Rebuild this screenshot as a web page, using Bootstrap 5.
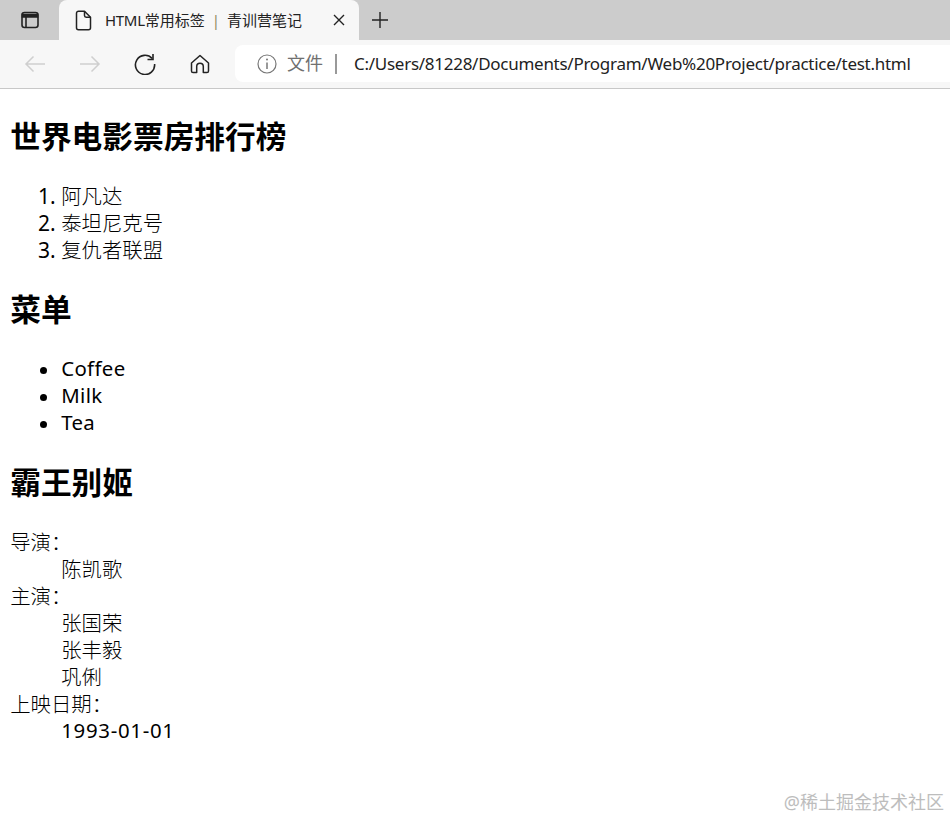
<!DOCTYPE html>
<html lang="zh-CN">
<head>
<meta charset="utf-8">
<title>HTML常用标签 | 青训营笔记</title>
<link href="https://cdn.jsdelivr.net/npm/bootstrap@5.3.0/dist/css/bootstrap.min.css" rel="stylesheet">
<style>
html, body { height: 819px; overflow: hidden; }
body { font-family: "Noto Sans", "Noto Sans CJK SC", sans-serif; color: #000; background: #fff; position: relative; }
.tabstrip { height: 40px; background: #ccc; }
.panel-btn { width: 59px; }
.tab-item { width: 300px; height: 40px; background: #f7f7f7; border-radius: 8px 8px 0 0; font-size: 15px; color: #222; padding-left: 16px; padding-right: 14px; }
.tab-title { margin-left: 13px; white-space: pre; }
.tab-latin { letter-spacing: -0.3px; }
.tab-pipe { color: #8f8a60; margin: 0 7px; }
.tab-add { width: 42px; }
.toolbar { height: 49px; background: #f7f7f7; border-bottom: 1px solid #c8c8c8; padding-top: 5px; padding-bottom: 6px; }
.nav-slot { width: 55px; }
.nav-first { margin-left: 7px; }
.addr-bar { flex: 1; margin-left: 8px; background: #fff; border-radius: 8px 0 0 8px; font-size: 17px; padding-left: 22px; white-space: nowrap; overflow: hidden; }
.addr-file { color: #707070; margin-left: 10px; font-size: 18px; }
.addr-sep { width: 2px; height: 20px; background: #999; margin: 0 16px 0 12px; }
.addr-url { color: #222; letter-spacing: -0.27px; margin-left: 1px; }
.doc { padding: 2px 10.2px 0; font-size: 20.4px; line-height: 27px; font-weight: 300; }
.doc h2 { font-size: 30.7px; font-weight: 700; line-height: 41.2px; margin: 25.4px 0; }
.doc ol, .doc ul { margin: 0; padding-left: 51px; }
.doc ol li::marker { font-size: 21px; font-weight: 400; }
.doc dl { margin: 0; }
.doc dt { font-weight: 300; }
.doc dd { margin: 0 0 0 51px; }
.latin-word { font-weight: 400; letter-spacing: 0.35px; position: relative; top: -1px; }
.date-value { font-weight: 400; letter-spacing: 0.7px; position: relative; top: -1px; }
.mark-text { position: absolute; right: 6px; bottom: 5px; font-size: 18px; line-height: 24px; color: #bdbdbd; }
</style>
</head>
<body>
<div class="tabstrip d-flex align-items-center">
  <div class="panel-btn d-flex justify-content-center align-items-center">
    <svg width="20" height="20" viewBox="0 0 20 20" fill="none" stroke="#222" stroke-width="1.6"><rect x="2" y="2.5" width="16" height="15" rx="2.5"/><path d="M2.5 4.5h15v2.5h-15z" fill="#222"/><path d="M6 7v10"/></svg>
  </div>
  <div class="tab-item d-flex align-items-center">
    <svg width="17" height="21" viewBox="0 0 17 21" fill="none" stroke="#222" stroke-width="1.5" stroke-linejoin="round"><path d="M1.5 3.2a2 2 0 0 1 2-2h6l6 6v10.6a2 2 0 0 1-2 2h-10a2 2 0 0 1-2-2z"/><path d="M9.5 1.2v4.4a1.7 1.7 0 0 0 1.7 1.7h4.3"/></svg>
    <span class="tab-title flex-grow-1"><span class="tab-latin">HTML</span>常用标签<span class="tab-pipe">|</span>青训营笔记</span>
    <svg width="12" height="12" viewBox="0 0 12 12" stroke="#222" stroke-width="1.4"><path d="M1 1l10 10M11 1L1 11"/></svg>
  </div>
  <div class="tab-add d-flex justify-content-center align-items-center">
    <svg width="18" height="18" viewBox="0 0 18 18" stroke="#222" stroke-width="1.4"><path d="M9 1v16M1 9h16"/></svg>
  </div>
</div>
<div class="toolbar d-flex align-items-stretch">
  <div class="nav-slot nav-first d-flex justify-content-center align-items-center">
    <svg width="22" height="18" viewBox="0 0 22 18" fill="none" stroke="#cfcfcf" stroke-width="1.5"><path d="M21 9H2M9.5 1.5L2 9l7.5 7.5"/></svg>
  </div>
  <div class="nav-slot d-flex justify-content-center align-items-center">
    <svg width="22" height="18" viewBox="0 0 22 18" fill="none" stroke="#cfcfcf" stroke-width="1.5"><path d="M1 9h19M12.5 1.5L20 9l-7.5 7.5"/></svg>
  </div>
  <div class="nav-slot d-flex justify-content-center align-items-center">
    <svg width="22" height="22" viewBox="0 0 22 22" fill="none" stroke="#222" stroke-width="1.6"><path d="M18.2 5.5A9.6 9.6 0 1 0 20.6 11"/><path d="M19 1v5.5h-5.5"/></svg>
  </div>
  <div class="nav-slot d-flex justify-content-center align-items-center">
    <svg width="20" height="20" viewBox="0 0 20 20" fill="none" stroke="#222" stroke-width="1.5" stroke-linejoin="round"><path d="M10 1.5L1.5 9v8a1.6 1.6 0 0 0 1.6 1.6h3.6v-6a3.3 3.3 0 0 1 6.6 0v6h3.6a1.6 1.6 0 0 0 1.6-1.6V9z"/></svg>
  </div>
  <div class="addr-bar d-flex align-items-center">
    <svg width="20" height="20" viewBox="0 0 20 20" fill="none" stroke="#777" stroke-width="1.2"><circle cx="10" cy="10" r="9"/><path d="M10 8.5v6.5" stroke-width="1.5"/><circle cx="10" cy="5.6" r="1" fill="#777" stroke="none"/></svg>
    <span class="addr-file">文件</span>
    <span class="addr-sep"></span>
    <span class="addr-url">C:/Users/81228/Documents/Program/Web%20Project/practice/test.html</span>
  </div>
</div>
<main class="doc">
  <h2>世界电影票房排行榜</h2>
  <ol>
    <li>阿凡达</li>
    <li>泰坦尼克号</li>
    <li>复仇者联盟</li>
  </ol>
  <h2>菜单</h2>
  <ul>
    <li><span class="latin-word">Coffee</span></li>
    <li><span class="latin-word">Milk</span></li>
    <li><span class="latin-word">Tea</span></li>
  </ul>
  <h2>霸王别姬</h2>
  <dl>
    <dt>导演：</dt>
    <dd>陈凯歌</dd>
    <dt>主演：</dt>
    <dd>张国荣</dd>
    <dd>张丰毅</dd>
    <dd>巩俐</dd>
    <dt>上映日期：</dt>
    <dd><span class="date-value">1993-01-01</span></dd>
  </dl>
</main>
<div class="mark-text">@稀土掘金技术社区</div>
<script src="https://cdn.jsdelivr.net/npm/bootstrap@5.3.0/dist/js/bootstrap.bundle.min.js"></script>
</body>
</html>
